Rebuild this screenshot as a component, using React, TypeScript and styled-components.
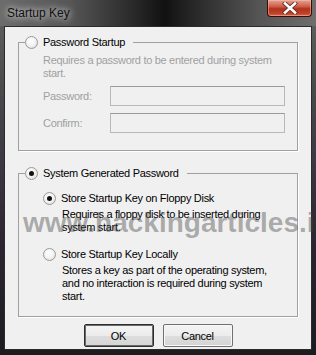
import React from "react";
import styled, { createGlobalStyle } from "styled-components";

const GlobalStyle = createGlobalStyle`
  html, body {
    margin: 0;
    padding: 0;
    background: #1b1b1b;
  }
  body {
    width: 316px;
    height: 355px;
    overflow: hidden;
  }
`;

const Window = styled.div`
  position: relative;
  width: 316px;
  height: 355px;
  box-sizing: border-box;
  display: flex;
  flex-direction: column;
  overflow: hidden;
  background: linear-gradient(
    180deg,
    #646464 0%,
    #4a4a4c 25%,
    #3a3440 50%,
    #2b2430 70%,
    #1c1c20 100%
  );
`;

const TitleBar = styled.div`
  height: 26px;
  flex: 0 0 26px;
  display: flex;
  align-items: flex-start;
  justify-content: space-between;
  background: linear-gradient(
    90deg,
    #6c6c6c 0%,
    #565656 22%,
    #2a2a2a 42%,
    #111 52%,
    #2e2e2e 64%,
    #555 82%,
    #6e6e6e 100%
  );
`;

const Title = styled.span`
  margin: 6px 0 0 7px;
  font: 12px "Liberation Sans", Arial, sans-serif;
  color: #111;
  text-shadow: 0 0 6px rgba(255, 255, 255, 0.8), 0 0 10px rgba(255, 255, 255, 0.6);
`;

const CloseButton = styled.div`
  width: 45px;
  height: 17px;
  margin-right: 4px;
  box-sizing: border-box;
  display: flex;
  align-items: center;
  justify-content: center;
  border: 1px solid #3a0c06;
  border-top: none;
  border-radius: 0 0 4px 4px;
  background: linear-gradient(
    180deg,
    #e3a393 0%,
    #cf5f48 40%,
    #b0311c 55%,
    #c2432a 85%,
    #d36a4c 100%
  );
  box-shadow: inset 0 0 0 1px rgba(255, 200, 190, 0.45);
`;

const Client = styled.div`
  flex: 1;
  margin: 0 4px 5px 4px;
  border: 1px solid #2b2b2b;
  background: #f0f0f0;
  padding: 9px 13px 0;
  display: flex;
  flex-direction: column;
  font: 11px "Liberation Sans", Arial, sans-serif;
  letter-spacing: -0.3px;
  color: #000;
`;

const Group = styled.fieldset<{ $gap?: number }>`
  margin: ${(p) => p.$gap ?? 0}px 0 0 0;
  padding: 0;
  min-width: 0;
  border: 1px solid #a0a0a0;
  box-shadow: 1px 1px 0 #fff;
`;

const Legend = styled.legend`
  margin-left: 6px;
  padding: 0 8px 0 0;
  height: 13px;
  display: flex;
  align-items: center;
  gap: 5px;
  line-height: 13px;
`;

const GroupBody = styled.div<{ $top: number; $bottom: number }>`
  padding: ${(p) => p.$top}px 0 ${(p) => p.$bottom}px 24px;
  display: flex;
  flex-direction: column;
`;

const Radio = styled.span<{ $checked?: boolean }>`
  position: relative;
  width: 13px;
  height: 13px;
  flex: 0 0 13px;
  box-sizing: border-box;
  border-radius: 50%;
  border: 1px solid #9a9a9a;
  background: radial-gradient(circle at 45% 40%, #ffffff 0%, #f4f4f4 45%, #d6d6d6 100%);

  &::after {
    content: "";
    display: ${(p) => (p.$checked ? "block" : "none")};
    position: absolute;
    left: 3px;
    top: 3px;
    width: 5px;
    height: 5px;
    border-radius: 50%;
    background: #111;
  }
`;

const Option = styled.div<{ $gap?: number }>`
  display: flex;
  align-items: center;
  gap: 5px;
  height: 13px;
  line-height: 13px;
  margin-top: ${(p) => p.$gap ?? 0}px;
`;

const Desc = styled.div<{ $disabled?: boolean; $indent?: number; $gap?: number }>`
  line-height: 13px;
  color: ${(p) => (p.$disabled ? "#a0a0a0" : "#000")};
  padding-left: ${(p) => p.$indent ?? 0}px;
  margin-top: ${(p) => p.$gap ?? 0}px;
`;

const FieldRow = styled.div<{ $gap: number }>`
  display: flex;
  align-items: center;
  height: 20px;
  margin-top: ${(p) => p.$gap}px;
`;

const FieldLabel = styled.span`
  width: 67px;
  color: #a0a0a0;
`;

const TextBox = styled.div`
  width: 175px;
  height: 20px;
  box-sizing: border-box;
  border: 1px solid #b8b8b8;
  border-top-color: #9a9a9a;
  background: #f0f0f0;
`;

const ButtonRow = styled.div`
  margin-top: 7px;
  display: flex;
  justify-content: center;
  gap: 9px;
`;

const Button = styled.div<{ $default?: boolean }>`
  width: 70px;
  height: 23px;
  box-sizing: border-box;
  display: flex;
  align-items: center;
  justify-content: center;
  border: 1px solid ${(p) => (p.$default ? "#2e2e2e" : "#707070")};
  border-radius: 2px;
  box-shadow: ${(p) => (p.$default ? "inset 0 0 0 1px #6a6a6a" : "inset 0 0 0 1px #f8f8f8")};
  background: linear-gradient(180deg, #f4f4f4 0%, #ececec 50%, #dedede 51%, #d4d4d4 100%);
  font: 11px "Liberation Sans", Arial, sans-serif;
  color: #000;
`;

const Watermark = styled.div`
  position: absolute;
  left: 23px;
  top: 209px;
  font: bold 28px "Liberation Sans", Arial, sans-serif;
  line-height: 28px;
  letter-spacing: 0;
  color: rgba(70, 70, 70, 0.42);
  white-space: nowrap;
  pointer-events: none;
`;

const CloseIcon = () => (
  <svg width="16" height="12" viewBox="0 0 16 12">
    <path
      d="M3 1.5 L13 10.5 M13 1.5 L3 10.5"
      stroke="#5a2a22"
      strokeWidth="4.2"
      strokeLinecap="square"
      fill="none"
    />
    <path
      d="M3 1.5 L13 10.5 M13 1.5 L3 10.5"
      stroke="#fff"
      strokeWidth="2.6"
      strokeLinecap="square"
      fill="none"
    />
  </svg>
);

export default function App() {
  return (
    <>
      <GlobalStyle />
      <Window>
        <TitleBar>
          <Title>Startup Key</Title>
          <CloseButton>
            <CloseIcon />
          </CloseButton>
        </TitleBar>
        <Client>
          <Group>
            <Legend>
              <Radio />
              Password Startup
            </Legend>
            <GroupBody $top={5} $bottom={17}>
              <Desc $disabled>
                Requires a password to be entered during system
                <br />
                start.
              </Desc>
              <FieldRow $gap={6}>
                <FieldLabel>Password:</FieldLabel>
                <TextBox />
              </FieldRow>
              <FieldRow $gap={7}>
                <FieldLabel>Confirm:</FieldLabel>
                <TextBox />
              </FieldRow>
            </GroupBody>
          </Group>

          <Group $gap={16}>
            <Legend>
              <Radio $checked />
              System Generated Password
            </Legend>
            <GroupBody $top={12} $bottom={13}>
              <Option>
                <Radio $checked />
                Store Startup Key on Floppy Disk
              </Option>
              <Desc $indent={19} $gap={3}>
                Requires a floppy disk to be inserted during
                <br />
                system start.
              </Desc>
              <Option $gap={14}>
                <Radio />
                Store Startup Key Locally
              </Option>
              <Desc $indent={19} $gap={3}>
                Stores a key as part of the operating system,
                <br />
                and no interaction is required during system
                <br />
                start.
              </Desc>
            </GroupBody>
          </Group>

          <ButtonRow>
            <Button $default>OK</Button>
            <Button>Cancel</Button>
          </ButtonRow>
        </Client>
        <Watermark>www.hackingarticles.in</Watermark>
      </Window>
    </>
  );
}
